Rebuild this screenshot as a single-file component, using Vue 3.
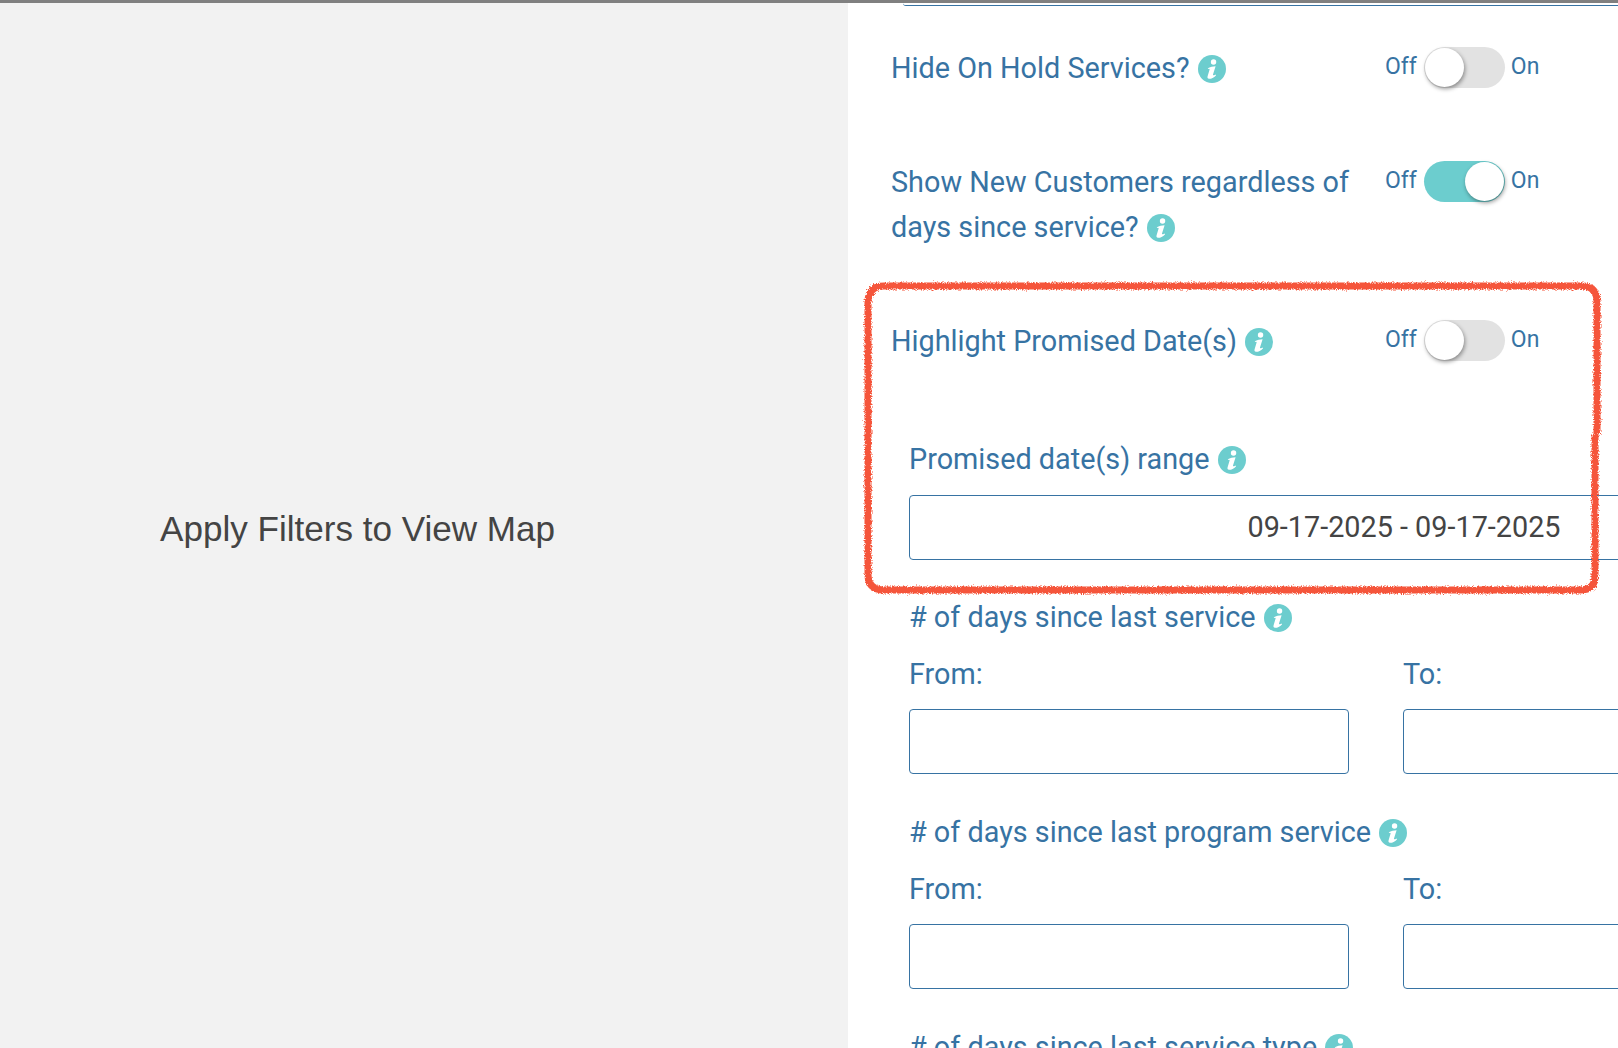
<template>
  <div class="page">
    <div class="top-bar"></div>
    <div class="content">
      <div class="map-pane">
        <p class="map-msg">Apply Filters to View Map</p>
      </div>
      <div class="filters">
        <div class="cut-input"></div>

        <div v-for="row in toggleRows" :key="row.label" class="toggle-row" :class="row.cls">
          <div class="toggle-label">
            {{ row.label }}
            <svg class="info" viewBox="0 0 28 28" aria-hidden="true">
              <circle cx="14" cy="14" r="14" fill="#6ccdce" />
              <path fill="#fff" :d="infoPath" />
            </svg>
          </div>
          <div class="switch">
            <span>Off</span>
            <div class="track" :class="{ on: row.on }"><div class="knob"></div></div>
            <span class="on-text">On</span>
          </div>
        </div>

        <div class="range-block">
          <div class="field-label">
            Promised date(s) range
            <svg class="info" viewBox="0 0 28 28" aria-hidden="true">
              <circle cx="14" cy="14" r="14" fill="#6ccdce" />
              <path fill="#fff" :d="infoPath" />
            </svg>
          </div>
          <div class="date-input">09-17-2025 - 09-17-2025</div>
        </div>

        <div v-for="group in rangeGroups" :key="group" class="days-group">
          <div class="field-label">
            {{ group }}
            <svg class="info" viewBox="0 0 28 28" aria-hidden="true">
              <circle cx="14" cy="14" r="14" fill="#6ccdce" />
              <path fill="#fff" :d="infoPath" />
            </svg>
          </div>
          <div class="from-to">
            <div class="col">
              <div class="col-label">From:</div>
              <div class="box"></div>
            </div>
            <div class="col">
              <div class="col-label">To:</div>
              <div class="box"></div>
            </div>
          </div>
        </div>
      </div>
    </div>

    <!-- red marker annotation drawn over the screenshot -->
    <svg class="marker" viewBox="0 0 750 325" aria-hidden="true">
      <defs>
        <filter id="rough" x="-5%" y="-5%" width="110%" height="110%">
          <feTurbulence type="fractalNoise" baseFrequency="0.8" numOctaves="2" seed="4" />
          <feDisplacementMap in="SourceGraphic" scale="5" />
        </filter>
      </defs>
      <path
        d="M735 156V298Q735 312 720 312H24Q8 312 8 296V24Q8 8 24 8H722Q737 8 737 24V156"
        fill="none"
        stroke="#f5553a"
        stroke-width="7"
        filter="url(#rough)"
      />
    </svg>
  </div>
</template>

<script setup>
const infoPath = 'M15.6 4.3a2.7 2.7 0 1 1-.1 5.4 2.7 2.7 0 0 1 .1-5.4zM9.8 13.2C12 12 15 11.2 17.6 11.2L15 19.6C14.8 20.4 15.4 20.6 17.6 19.4L18 20.4C15.6 22.8 13 24 11 23.8 9.6 23.6 9.2 22.6 9.6 21.2L11.6 14.6C11.8 13.8 11.2 13.6 10.1 14z';

const toggleRows = [
  { label: 'Hide On Hold Services?', on: false, cls: 'r1' },
  { label: 'Show New Customers regardless of days since service?', on: true, cls: 'r2' },
  { label: 'Highlight Promised Date(s)', on: false, cls: 'r3' }
];

const rangeGroups = [
  '# of days since last service',
  '# of days since last program service',
  '# of days since last service type'
];
</script>

<style>
html, body {
  margin: 0;
  overflow: hidden;
  background: #fff;
}
</style>

<style scoped>
.page {
  position: relative;
  width: 1618px;
  height: 1048px;
  overflow: hidden;
  font-family: Roboto, sans-serif;
}
.top-bar {
  height: 3px;
  background: #808080;
}
.content {
  display: flex;
  height: 1045px;
}
.map-pane {
  width: 848px;
  flex: none;
  box-sizing: border-box;
  padding: 6px 0 0 160px;
  display: flex;
  align-items: center;
  background: #f2f2f2;
}
.map-msg {
  margin: 0;
  font-family: "Liberation Sans", Arial, sans-serif;
  font-size: 35.1px;
  color: #444;
}
.filters {
  flex: 1;
  min-width: 0;
  overflow: hidden;
  padding-left: 43px;
  color: #3773a3;
  font-size: 28.8px;
  line-height: 45px;
}
.cut-input {
  height: 2px;
  margin: 0 0 40px 12px;
  border-bottom: 1px solid #3773a3;
  border-bottom-left-radius: 4px;
}
.toggle-row {
  display: flex;
  align-items: flex-start;
}
.r1 { margin-bottom: 69px; }
.r2 { margin-bottom: 69px; }
.r3 { margin-bottom: 73px; }
.toggle-label {
  width: 494px;
  flex: none;
}
.info {
  width: 28px;
  height: 28px;
  margin-left: 1px;
  vertical-align: -5px;
}
.switch {
  display: flex;
  align-items: center;
  gap: 7px;
  font-size: 23px;
  line-height: 41px;
}
.switch span {
  padding-bottom: 2px;
}
.on-text {
  margin-left: -1px;
}
.track {
  position: relative;
  width: 81px;
  height: 41px;
  border-radius: 21px;
  background: #e2e2e2;
}
.track.on {
  background: #6ccdce;
}
.knob {
  position: absolute;
  left: 1px;
  top: 1px;
  width: 39px;
  height: 39px;
  border-radius: 50%;
  background: #fff;
  box-shadow: 1px 2px 4px rgba(0, 0, 0, 0.4);
}
.track.on .knob {
  left: 41px;
}
.field-label {
  margin-bottom: 13px;
}
.date-input {
  box-sizing: border-box;
  width: 990px;
  height: 65px;
  border: 1px solid #3773a3;
  border-radius: 4px;
  display: flex;
  align-items: center;
  justify-content: center;
  color: #444;
}
.range-block {
  margin-bottom: 35px;
  margin-left: 18px;
}
.days-group {
  margin-left: 18px;
  margin-bottom: 36px;
}
.days-group .field-label {
  margin-bottom: 12px;
}
.from-to {
  display: flex;
  gap: 54px;
}
.col {
  width: 440px;
  flex: none;
}
.col-label {
  margin-bottom: 12px;
}
.box {
  box-sizing: border-box;
  height: 65px;
  border: 1px solid #3773a3;
  border-radius: 4px;
}
.marker {
  position: absolute;
  left: 860px;
  top: 278px;
  width: 750px;
  height: 325px;
  pointer-events: none;
}
</style>
